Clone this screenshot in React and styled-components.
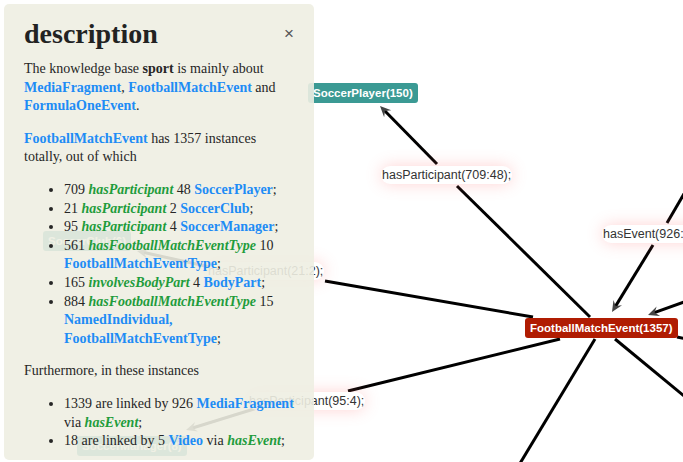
import React from 'react';
import styled, { createGlobalStyle } from 'styled-components';

const GlobalStyle = createGlobalStyle`
  html, body {
    margin: 0;
    padding: 0;
    background: #ffffff;
    overflow: hidden;
  }
`;

const nodes = [
  { id: 'player', label: 'SoccerPlayer(150)', x: 308, y: 83, color: '#3b9a94' },
  { id: 'club', label: 'SoccerClub(6)', x: 43, y: 231, color: '#3b9a94' },
  { id: 'manager', label: 'SoccerManager(8)', x: 77, y: 436, color: '#3b9a94' },
  { id: 'fme', label: 'FootballMatchEvent(1357)', x: 525, y: 318, color: '#b01c02' },
];

const edgeLabels = [
  { text: 'hasParticipant(709:48);', x: 381, y: 166 },
  { text: 'hasEvent(926:1339);', x: 602, y: 225 },
  { text: 'hasParticipant(21:2);', x: 207, y: 262 },
  { text: 'hasParticipant(95:4);', x: 248, y: 392 },
];

// [x1, y1, x2, y2, arrow at end]
const segments = [
  [437, 164, 380, 106, true],
  [457, 186, 590, 317, false],
  [210, 267, 137, 251, true],
  [325, 281, 533, 317, false],
  [270, 404, 186, 430, true],
  [560, 339, 348, 391, false],
  [595, 339, 516, 470, false],
  [615, 339, 695, 405, false],
  [695, 298, 648, 315, true],
  [692, 180, 667, 223, false],
  [653, 245, 612, 312, true],
  [677, 337, 695, 341, false],
];

const Canvas = styled.div`
  position: relative;
  width: 683px;
  height: 462px;
  overflow: hidden;
  background: #ffffff;
  font-family: 'Liberation Sans', Arial, sans-serif;
`;

const Edges = styled.svg`
  position: absolute;
  left: 0;
  top: 0;
`;

const Node = styled.div`
  position: absolute;
  height: 20px;
  line-height: 20px;
  padding: 0 5px;
  border-radius: 3px;
  background: ${(p) => p.$color};
  color: #ffffff;
  font-size: 11.5px;
  font-weight: bold;
  white-space: nowrap;
`;

const EdgeLabel = styled.div`
  position: absolute;
  height: 18px;
  line-height: 18px;
  padding: 0 1px;
  border-radius: 9px;
  background: #ffffff;
  box-shadow: 0 0 16px 0 rgba(255, 110, 110, 0.3);
  color: #333333;
  font-size: 12.5px;
  white-space: nowrap;
`;

const Panel = styled.div`
  position: absolute;
  left: 4px;
  top: 4px;
  width: 310px;
  height: 456px;
  box-sizing: border-box;
  padding: 14px 20px;
  border-radius: 5px;
  background: rgba(238, 238, 226, 0.9);
  color: #262626;
  font-family: 'Liberation Serif', 'Times New Roman', serif;
  font-size: 14px;
  line-height: 18.6px;
`;

const Header = styled.div`
  display: flex;
  justify-content: space-between;
  align-items: flex-start;
  margin-bottom: 11px;
`;

const Title = styled.h2`
  margin: 0;
  font-size: 28px;
  line-height: 31px;
  font-weight: bold;
  color: #222222;
`;

const Close = styled.button`
  border: none;
  background: none;
  padding: 0;
  margin-top: 6px;
  font-family: 'Liberation Sans', Arial, sans-serif;
  font-size: 17px;
  line-height: 20px;
  color: #555555;
  cursor: pointer;
`;

const Para = styled.p`
  margin: 0 0 14px;
`;

const List = styled.ul`
  margin: 0 0 14px;
  padding-left: 40px;
`;

const Cls = styled.a`
  color: #1e8cf5;
  font-weight: bold;
  text-decoration: none;
`;

const Rel = styled.b`
  color: #1f9c3c;
  font-style: italic;
`;

function Arrow({ x1, y1, x2, y2 }) {
  const a = Math.atan2(y2 - y1, x2 - x1);
  const len = 11;
  const w = 5;
  const bx = x2 - len * Math.cos(a);
  const by = y2 - len * Math.sin(a);
  const pts = [
    [x2, y2],
    [bx + w * Math.sin(a), by - w * Math.cos(a)],
    [x2 - 7 * Math.cos(a), y2 - 7 * Math.sin(a)],
    [bx - w * Math.sin(a), by + w * Math.cos(a)],
  ];
  return <polygon points={pts.map((p) => p.join(',')).join(' ')} fill="#444444" />;
}

export default function App() {
  return (
    <>
      <GlobalStyle />
      <Canvas>
        <Edges width="683" height="462">
          {segments.map(([x1, y1, x2, y2, arrow], i) => {
            const a = Math.atan2(y2 - y1, x2 - x1);
            return (
              <g key={i}>
                <line
                  x1={x1}
                  y1={y1}
                  x2={arrow ? x2 - 6 * Math.cos(a) : x2}
                  y2={arrow ? y2 - 6 * Math.sin(a) : y2}
                  stroke="#000000"
                  strokeWidth="3"
                />
                {arrow && <Arrow x1={x1} y1={y1} x2={x2} y2={y2} />}
              </g>
            );
          })}
        </Edges>
        {edgeLabels.map((l) => (
          <EdgeLabel key={l.text} style={{ left: l.x, top: l.y }}>
            {l.text}
          </EdgeLabel>
        ))}
        {nodes.map((n) => (
          <Node key={n.id} $color={n.color} style={{ left: n.x, top: n.y }}>
            {n.label}
          </Node>
        ))}

        <Panel>
          <Header>
            <Title>description</Title>
            <Close>×</Close>
          </Header>
          <Para>
            The knowledge base <b>sport</b> is mainly about <Cls>MediaFragment</Cls>,{' '}
            <Cls>FootballMatchEvent</Cls> and <Cls>FormulaOneEvent</Cls>.
          </Para>
          <Para>
            <Cls>FootballMatchEvent</Cls> has 1357 instances totally, out of which
          </Para>
          <List>
            <li>
              709 <Rel>hasParticipant</Rel> 48 <Cls>SoccerPlayer</Cls>;
            </li>
            <li>
              21 <Rel>hasParticipant</Rel> 2 <Cls>SoccerClub</Cls>;
            </li>
            <li>
              95 <Rel>hasParticipant</Rel> 4 <Cls>SoccerManager</Cls>;
            </li>
            <li>
              561 <Rel>hasFootballMatchEventType</Rel> 10 <Cls>FootballMatchEventType</Cls>;
            </li>
            <li>
              165 <Rel>involvesBodyPart</Rel> 4 <Cls>BodyPart</Cls>;
            </li>
            <li>
              884 <Rel>hasFootballMatchEventType</Rel> 15 <Cls>NamedIndividual,</Cls>{' '}
              <Cls>FootballMatchEventType</Cls>;
            </li>
          </List>
          <Para>Furthermore, in these instances</Para>
          <List>
            <li>
              1339 are linked by 926 <Cls>MediaFragment</Cls> via <Rel>hasEvent</Rel>;
            </li>
            <li>
              18 are linked by 5 <Cls>Video</Cls> via <Rel>hasEvent</Rel>;
            </li>
          </List>
        </Panel>
      </Canvas>
    </>
  );
}
